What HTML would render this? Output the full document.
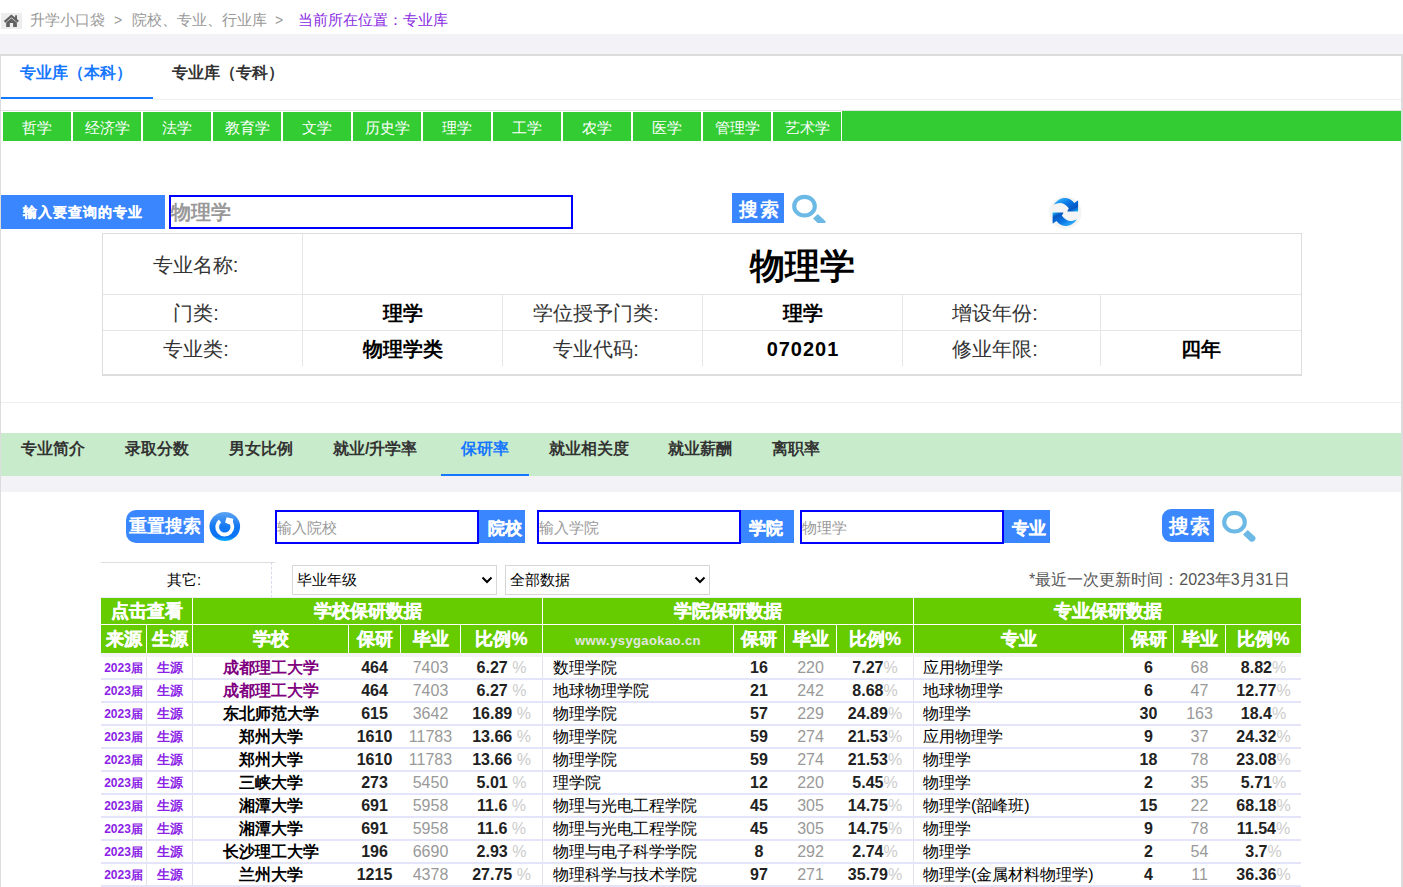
<!DOCTYPE html><html><head><meta charset="utf-8"><title>专业库</title><style>
*{margin:0;padding:0;box-sizing:border-box}
html,body{width:1403px;height:887px;overflow:hidden;background:#fff}
body{position:relative;font-family:"Liberation Sans",sans-serif;color:#333}
body>div{position:absolute}
.t{white-space:nowrap;overflow:visible}
.c{text-align:center}
svg{display:block}
</style></head><body>
<div style="left:1px;top:13px;width:21px;height:16px;background:#ededed"><svg width="21" height="16" viewBox="0 0 21 16"><polyline points="3.6,8.8 10.4,2.9 17.2,8.6" fill="none" stroke="#606060" stroke-width="2.3"/><rect x="14.1" y="2.3" width="1.9" height="4" fill="#606060"/><path d="M5.2,9.6 L10.4,5.3 L15.9,9.6 V13.9 H12.1 V10 H8.8 V13.9 H5.2 Z" fill="#606060"/></svg></div>
<div class="t" style="left:30px;top:9px;width:80px;height:22px;line-height:22px;font-size:15px;color:#999">升学小口袋</div>
<div class="t" style="left:114px;top:9px;width:12px;height:22px;line-height:22px;font-size:14px;color:#999">&gt;</div>
<div class="t" style="left:132px;top:9px;width:140px;height:22px;line-height:22px;font-size:15px;color:#999">院校、专业、行业库</div>
<div class="t" style="left:275px;top:9px;width:12px;height:22px;line-height:22px;font-size:14px;color:#999">&gt;</div>
<div class="t" style="left:298px;top:9px;width:160px;height:22px;line-height:22px;font-size:15px;color:#8a2be2">当前所在位置：专业库</div>
<div style="left:0px;top:34px;width:1403px;height:20px;background:#f3f3f7"></div>
<div style="left:0px;top:54px;width:1403px;height:348px;border-top:2px solid #dcdcdc;border-left:1px solid #dcdcdc;border-right:2px solid #dcdcdc"></div>
<div style="left:0px;top:402px;width:1403px;height:485px;border-left:1px solid #dcdcdc;border-right:2px solid #dcdcdc"></div>
<div class="t" style="left:20px;top:60px;width:120px;height:26px;line-height:26px;font-size:16px;font-weight:bold;color:#1677ff">专业库（本科）</div>
<div class="t" style="left:172px;top:60px;width:120px;height:26px;line-height:26px;font-size:16px;font-weight:bold;color:#333">专业库（专科）</div>
<div style="left:1px;top:97px;width:152px;height:2px;background:#1677ff"></div>
<div style="left:153px;top:99px;width:1248px;height:1px;background:#eeeeee"></div>
<div style="left:1px;top:110px;width:1400px;height:1px;background:#e3e3e3"></div>
<div style="left:1px;top:111px;width:1400px;height:30px;background:#33cc33"></div>
<div style="left:1px;top:111px;width:1px;height:30px;background:#fff"></div>
<div class="t c" style="left:2px;top:111px;width:70px;height:30px;border:1px solid #fff;border-bottom:0;line-height:32px;font-size:15px;color:#fff">哲学</div>
<div class="t c" style="left:72px;top:111px;width:70px;height:30px;border:1px solid #fff;border-bottom:0;line-height:32px;font-size:15px;color:#fff">经济学</div>
<div class="t c" style="left:142px;top:111px;width:70px;height:30px;border:1px solid #fff;border-bottom:0;line-height:32px;font-size:15px;color:#fff">法学</div>
<div class="t c" style="left:212px;top:111px;width:70px;height:30px;border:1px solid #fff;border-bottom:0;line-height:32px;font-size:15px;color:#fff">教育学</div>
<div class="t c" style="left:282px;top:111px;width:70px;height:30px;border:1px solid #fff;border-bottom:0;line-height:32px;font-size:15px;color:#fff">文学</div>
<div class="t c" style="left:352px;top:111px;width:70px;height:30px;border:1px solid #fff;border-bottom:0;line-height:32px;font-size:15px;color:#fff">历史学</div>
<div class="t c" style="left:422px;top:111px;width:70px;height:30px;border:1px solid #fff;border-bottom:0;line-height:32px;font-size:15px;color:#fff">理学</div>
<div class="t c" style="left:492px;top:111px;width:70px;height:30px;border:1px solid #fff;border-bottom:0;line-height:32px;font-size:15px;color:#fff">工学</div>
<div class="t c" style="left:562px;top:111px;width:70px;height:30px;border:1px solid #fff;border-bottom:0;line-height:32px;font-size:15px;color:#fff">农学</div>
<div class="t c" style="left:632px;top:111px;width:70px;height:30px;border:1px solid #fff;border-bottom:0;line-height:32px;font-size:15px;color:#fff">医学</div>
<div class="t c" style="left:702px;top:111px;width:70px;height:30px;border:1px solid #fff;border-bottom:0;line-height:32px;font-size:15px;color:#fff">管理学</div>
<div class="t c" style="left:772px;top:111px;width:70px;height:30px;border:1px solid #fff;border-bottom:0;line-height:32px;font-size:15px;color:#fff">艺术学</div>
<div style="left:1px;top:195px;width:164px;height:34px;background:#3a86ff"></div>
<div class="t" style="left:23px;top:195px;width:150px;height:34px;line-height:34px;color:#fff;font-size:14px;font-weight:bold;letter-spacing:1px;-webkit-text-stroke:0.2px #fff">输入要查询的专业</div>
<div style="left:169px;top:195px;width:404px;height:34px;border:2px solid #0000ff"></div>
<div class="t" style="left:171px;top:195px;width:120px;height:34px;line-height:34px;font-size:20px;font-weight:bold;color:#999">物理学</div>
<div style="left:732px;top:193px;width:52px;height:30px;background:#3a86ff"></div>
<div class="t" style="left:739px;top:195px;width:52px;height:30px;line-height:30px;color:#fff;font-size:19px;font-weight:bold;font-family:'Liberation Serif',serif;letter-spacing:2px">搜索</div>
<div style="left:788px;top:190px;width:42px;height:33px;overflow:hidden"><svg width="42" height="40"><ellipse cx="16.5" cy="16.2" rx="10.3" ry="9.35" fill="none" stroke="#6cb9e6" stroke-width="4.1"/><path d="M29.8,24.0 L25,28.5 L32,35.2 Q34.5,36.8 36.6,34.5 Q38.5,32.2 36.8,30.5 Z" fill="#6cb9e6"/></svg></div>
<div style="left:1049px;top:196px;width:33px;height:33px"><svg width="33" height="33" viewBox="0 0 33 33">
<defs><linearGradient id="rg" x1="0" y1="0" x2="1" y2="1"><stop offset="0" stop-color="#45c8ff"/><stop offset="0.45" stop-color="#0a78e6"/><stop offset="0.8" stop-color="#0456c4"/><stop offset="1" stop-color="#20b8ff"/></linearGradient></defs>
<circle cx="16.35" cy="16.5" r="16.2" fill="#f4f4f4"/>
<path d="M4.9,8.8 C8,3.6 13,1.8 16.7,2.0 C20,2.2 23,4 25.3,7.0 L29.1,4.2 L29.1,15.4 L18.2,15.4 L19.8,12.3 C17,9 14.5,7.2 12,7 C9.5,6.8 7,7.6 4.9,8.8 Z" fill="url(#rg)"/>
<path d="M4.9,8.8 C8,3.6 13,1.8 16.7,2.0 C20,2.2 23,4 25.3,7.0 L29.1,4.2 L29.1,15.4 L18.2,15.4 L19.8,12.3 C17,9 14.5,7.2 12,7 C9.5,6.8 7,7.6 4.9,8.8 Z" fill="url(#rg)" transform="rotate(180 16.35 16)"/>
</svg></div>
<div style="left:102px;top:233px;width:1200px;height:143px;border:1px solid #ddd;border-bottom:2px solid #ddd"></div>
<div style="left:103px;top:294px;width:1198px;height:1px;background:#e6e6e6"></div>
<div style="left:103px;top:330px;width:1198px;height:1px;background:#e6e6e6"></div>
<div style="left:302px;top:234px;width:1px;height:132px;background:#e6e6e6"></div>
<div style="left:502px;top:295px;width:1px;height:71px;background:#e6e6e6"></div>
<div style="left:702px;top:295px;width:1px;height:71px;background:#e6e6e6"></div>
<div style="left:902px;top:295px;width:1px;height:71px;background:#e6e6e6"></div>
<div style="left:1100px;top:295px;width:1px;height:71px;background:#e6e6e6"></div>
<div class="t" style="left:103px;top:235px;width:199px;height:60px;line-height:60px;font-size:20px;color:#333;text-align:center;padding-right:14px">专业名称:</div>
<div class="t" style="left:303px;top:236px;width:998px;height:60px;line-height:60px;font-size:35px;font-weight:bold;color:#000;text-align:center">物理学</div>
<div class="t" style="left:103px;top:296px;width:200px;height:35px;line-height:35px;font-size:20px;text-align:center;color:#333;padding-right:14px">门类:</div>
<div class="t" style="left:303px;top:296px;width:200px;height:35px;line-height:35px;font-size:20px;text-align:center;font-weight:bold;color:#000">理学</div>
<div class="t" style="left:503px;top:296px;width:200px;height:35px;line-height:35px;font-size:20px;text-align:center;color:#333;padding-right:14px">学位授予门类:</div>
<div class="t" style="left:703px;top:296px;width:200px;height:35px;line-height:35px;font-size:20px;text-align:center;font-weight:bold;color:#000">理学</div>
<div class="t" style="left:903px;top:296px;width:198px;height:35px;line-height:35px;font-size:20px;text-align:center;color:#333;padding-right:14px">增设年份:</div>
<div class="t" style="left:1101px;top:296px;width:200px;height:35px;line-height:35px;font-size:20px;text-align:center;font-weight:bold;color:#000"></div>
<div class="t" style="left:103px;top:332px;width:200px;height:35px;line-height:35px;font-size:20px;text-align:center;color:#333;padding-right:14px">专业类:</div>
<div class="t" style="left:303px;top:332px;width:200px;height:35px;line-height:35px;font-size:20px;text-align:center;font-weight:bold;color:#000">物理学类</div>
<div class="t" style="left:503px;top:332px;width:200px;height:35px;line-height:35px;font-size:20px;text-align:center;color:#333;padding-right:14px">专业代码:</div>
<div class="t" style="left:703px;top:332px;width:200px;height:35px;line-height:35px;font-size:20px;text-align:center;font-weight:bold;color:#000"><span style="letter-spacing:1px">070201</span></div>
<div class="t" style="left:903px;top:332px;width:198px;height:35px;line-height:35px;font-size:20px;text-align:center;color:#333;padding-right:14px">修业年限:</div>
<div class="t" style="left:1101px;top:332px;width:200px;height:35px;line-height:35px;font-size:20px;text-align:center;font-weight:bold;color:#000">四年</div>
<div style="left:1px;top:402px;width:1400px;height:1px;background:#eeeeee"></div>
<div style="left:1px;top:433px;width:1400px;height:43px;background:#c8ebcb"></div>
<div style="left:1px;top:476px;width:1400px;height:16px;background:#f3f3f7"></div>
<div class="t" style="left:21px;top:433px;width:120px;height:31px;line-height:31px;font-size:16px;font-weight:bold;color:#333">专业简介</div>
<div class="t" style="left:125px;top:433px;width:120px;height:31px;line-height:31px;font-size:16px;font-weight:bold;color:#333">录取分数</div>
<div class="t" style="left:229px;top:433px;width:120px;height:31px;line-height:31px;font-size:16px;font-weight:bold;color:#333">男女比例</div>
<div class="t" style="left:333px;top:433px;width:120px;height:31px;line-height:31px;font-size:16px;font-weight:bold;color:#333">就业/升学率</div>
<div class="t" style="left:461px;top:433px;width:120px;height:31px;line-height:31px;font-size:16px;font-weight:bold;color:#1677ff">保研率</div>
<div class="t" style="left:549px;top:433px;width:120px;height:31px;line-height:31px;font-size:16px;font-weight:bold;color:#333">就业相关度</div>
<div class="t" style="left:668px;top:433px;width:120px;height:31px;line-height:31px;font-size:16px;font-weight:bold;color:#333">就业薪酬</div>
<div class="t" style="left:772px;top:433px;width:120px;height:31px;line-height:31px;font-size:16px;font-weight:bold;color:#333">离职率</div>
<div style="left:441px;top:474px;width:88px;height:2px;background:#1677ff"></div>
<div class="t" style="left:126px;top:510px;width:78px;height:33px;line-height:33px;background:#3a86ff;border-radius:10px 0 0 10px;color:#fff;font-size:18px;font-weight:bold;font-family:'Liberation Serif',serif;text-align:center">重置搜索</div>
<div style="left:209px;top:511px;width:32px;height:32px"><svg width="32" height="32" viewBox="0 0 32 32">
<defs><linearGradient id="cg" x1="0" y1="0" x2="0" y2="1"><stop offset="0" stop-color="#5ea4f2"/><stop offset="0.5" stop-color="#1378f2"/><stop offset="0.85" stop-color="#0a74f5"/><stop offset="1" stop-color="#10b4ff"/></linearGradient></defs>
<ellipse cx="15.8" cy="15.5" rx="15.3" ry="14.5" fill="url(#cg)"/>
<path d="M11.0,10.0 A7.6 7.6 0 1 0 21.0,10.4" fill="none" stroke="#fff" stroke-width="3.8"/>
<path d="M17.6,6.2 L24.3,7.7 L23.8,11.1 L20.2,13.4 L16.1,11.6 Z" fill="#fff"/>
</svg></div>
<div style="left:275px;top:510px;width:204px;height:34px;border:2px solid #0000ff"></div>
<div class="t" style="left:277px;top:511px;width:150px;height:34px;line-height:34px;font-size:15px;color:#999">输入院校</div>
<div style="left:479px;top:510px;width:46px;height:33px;background:#3a86ff"></div>
<div class="t" style="left:488px;top:512px;width:40px;height:33px;line-height:33px;color:#fff;font-size:17px;font-weight:bold;-webkit-text-stroke:0.3px #fff">院校</div>
<div style="left:537px;top:510px;width:204px;height:34px;border:2px solid #0000ff"></div>
<div class="t" style="left:539px;top:511px;width:150px;height:34px;line-height:34px;font-size:15px;color:#999">输入学院</div>
<div style="left:741px;top:510px;width:53px;height:33px;background:#3a86ff"></div>
<div class="t" style="left:749px;top:512px;width:40px;height:33px;line-height:33px;color:#fff;font-size:17px;font-weight:bold;-webkit-text-stroke:0.3px #fff">学院</div>
<div style="left:800px;top:510px;width:204px;height:34px;border:2px solid #0000ff"></div>
<div class="t" style="left:802px;top:511px;width:150px;height:34px;line-height:34px;font-size:15px;color:#999">物理学</div>
<div style="left:1004px;top:510px;width:46px;height:33px;background:#3a86ff"></div>
<div class="t" style="left:1012px;top:512px;width:40px;height:33px;line-height:33px;color:#fff;font-size:17px;font-weight:bold;-webkit-text-stroke:0.3px #fff">专业</div>
<div style="left:1162px;top:509px;width:52px;height:33px;background:#3a86ff;border-radius:9px 0 0 9px"></div>
<div class="t" style="left:1169px;top:510px;width:52px;height:33px;line-height:33px;color:#fff;font-size:19.5px;font-weight:bold;font-family:'Liberation Serif',serif;letter-spacing:1px">搜索</div>
<div style="left:1218px;top:505px;width:42px;height:40px;overflow:hidden"><svg width="42" height="40"><ellipse cx="16.5" cy="17.2" rx="10.3" ry="9.35" fill="none" stroke="#6cb9e6" stroke-width="4.1"/><path d="M29.8,25.0 L25,29.5 L32,36.2 Q34.5,37.8 36.6,35.5 Q38.5,33.2 36.8,31.5 Z" fill="#6cb9e6"/></svg></div>
<div style="left:101px;top:562px;width:174px;height:1px;background:#dddddd"></div>
<div style="left:271px;top:562px;width:1px;height:36px;border-left:1px dashed #d8d8f0"></div>
<div class="t" style="left:101px;top:563px;width:174px;height:34px;line-height:34px;font-size:15px;color:#000;text-align:center;padding-right:8px">其它:</div>
<div style="left:292px;top:565px;width:205px;height:30px;border:1px solid #d6d6d6;background:#fff"></div>
<div class="t" style="left:297px;top:565px;width:120px;height:30px;line-height:30px;font-size:15px;color:#000">毕业年级</div>
<div style="left:481px;top:576px;width:12px;height:8px"><svg width="12" height="8" viewBox="0 0 12 8"><polyline points="1.5,1.5 6,6 10.5,1.5" fill="none" stroke="#000" stroke-width="2"/></svg></div>
<div style="left:505px;top:565px;width:205px;height:30px;border:1px solid #d6d6d6;background:#fff"></div>
<div class="t" style="left:510px;top:565px;width:120px;height:30px;line-height:30px;font-size:15px;color:#000">全部数据</div>
<div style="left:694px;top:576px;width:12px;height:8px"><svg width="12" height="8" viewBox="0 0 12 8"><polyline points="1.5,1.5 6,6 10.5,1.5" fill="none" stroke="#000" stroke-width="2"/></svg></div>
<div class="t" style="left:1029px;top:563px;width:270px;height:34px;line-height:34px;font-size:16px;color:#555">*最近一次更新时间：2023年3月31日</div>
<div style="left:101px;top:597px;width:1200px;height:1px;background:#ededfb"></div>
<div style="left:101px;top:598px;width:1200px;height:55px;background:#66cc00"></div>
<div style="left:101px;top:624px;width:1200px;height:1px;background:#fff"></div>
<div style="left:192px;top:598px;width:1px;height:55px;background:#fff"></div>
<div style="left:542px;top:598px;width:1px;height:55px;background:#fff"></div>
<div style="left:913px;top:598px;width:1px;height:55px;background:#fff"></div>
<div style="left:146px;top:625px;width:1px;height:28px;background:#fff"></div>
<div style="left:348px;top:625px;width:1px;height:28px;background:#fff"></div>
<div style="left:400px;top:625px;width:1px;height:28px;background:#fff"></div>
<div style="left:460px;top:625px;width:1px;height:28px;background:#fff"></div>
<div style="left:733px;top:625px;width:1px;height:28px;background:#fff"></div>
<div style="left:784px;top:625px;width:1px;height:28px;background:#fff"></div>
<div style="left:836px;top:625px;width:1px;height:28px;background:#fff"></div>
<div style="left:1123px;top:625px;width:1px;height:28px;background:#fff"></div>
<div style="left:1173px;top:625px;width:1px;height:28px;background:#fff"></div>
<div style="left:1225px;top:625px;width:1px;height:28px;background:#fff"></div>
<div class="t" style="left:101px;top:598px;width:91px;height:26px;line-height:26px;font-size:18px;font-weight:bold;color:#fff;text-align:center;-webkit-text-stroke:0.35px #fff">点击查看</div>
<div class="t" style="left:193px;top:598px;width:349px;height:26px;line-height:26px;font-size:18px;font-weight:bold;color:#fff;text-align:center;-webkit-text-stroke:0.35px #fff">学校保研数据</div>
<div class="t" style="left:543px;top:598px;width:370px;height:26px;line-height:26px;font-size:18px;font-weight:bold;color:#fff;text-align:center;-webkit-text-stroke:0.35px #fff">学院保研数据</div>
<div class="t" style="left:914px;top:598px;width:387px;height:26px;line-height:26px;font-size:18px;font-weight:bold;color:#fff;text-align:center;-webkit-text-stroke:0.35px #fff">专业保研数据</div>
<div class="t" style="left:101px;top:625px;width:45px;height:28px;line-height:28px;font-size:18px;font-weight:bold;color:#fff;text-align:center;-webkit-text-stroke:0.35px #fff">来源</div>
<div class="t" style="left:147px;top:625px;width:45px;height:28px;line-height:28px;font-size:18px;font-weight:bold;color:#fff;text-align:center;-webkit-text-stroke:0.35px #fff">生源</div>
<div class="t" style="left:193px;top:625px;width:155px;height:28px;line-height:28px;font-size:18px;font-weight:bold;color:#fff;text-align:center;-webkit-text-stroke:0.35px #fff">学校</div>
<div class="t" style="left:349px;top:625px;width:51px;height:28px;line-height:28px;font-size:18px;font-weight:bold;color:#fff;text-align:center;-webkit-text-stroke:0.35px #fff">保研</div>
<div class="t" style="left:401px;top:625px;width:59px;height:28px;line-height:28px;font-size:18px;font-weight:bold;color:#fff;text-align:center;-webkit-text-stroke:0.35px #fff">毕业</div>
<div class="t" style="left:461px;top:625px;width:81px;height:28px;line-height:28px;font-size:18px;font-weight:bold;color:#fff;text-align:center;-webkit-text-stroke:0.35px #fff">比例%</div>
<div class="t" style="left:543px;top:625px;width:190px;height:28px;line-height:28px;font-size:18px;font-weight:bold;color:#fff;text-align:center;-webkit-text-stroke:0.35px #fff"></div>
<div class="t" style="left:734px;top:625px;width:50px;height:28px;line-height:28px;font-size:18px;font-weight:bold;color:#fff;text-align:center;-webkit-text-stroke:0.35px #fff">保研</div>
<div class="t" style="left:785px;top:625px;width:51px;height:28px;line-height:28px;font-size:18px;font-weight:bold;color:#fff;text-align:center;-webkit-text-stroke:0.35px #fff">毕业</div>
<div class="t" style="left:837px;top:625px;width:76px;height:28px;line-height:28px;font-size:18px;font-weight:bold;color:#fff;text-align:center;-webkit-text-stroke:0.35px #fff">比例%</div>
<div class="t" style="left:914px;top:625px;width:209px;height:28px;line-height:28px;font-size:18px;font-weight:bold;color:#fff;text-align:center;-webkit-text-stroke:0.35px #fff">专业</div>
<div class="t" style="left:1124px;top:625px;width:49px;height:28px;line-height:28px;font-size:18px;font-weight:bold;color:#fff;text-align:center;-webkit-text-stroke:0.35px #fff">保研</div>
<div class="t" style="left:1174px;top:625px;width:51px;height:28px;line-height:28px;font-size:18px;font-weight:bold;color:#fff;text-align:center;-webkit-text-stroke:0.35px #fff">毕业</div>
<div class="t" style="left:1226px;top:625px;width:75px;height:28px;line-height:28px;font-size:18px;font-weight:bold;color:#fff;text-align:center;-webkit-text-stroke:0.35px #fff">比例%</div>
<div class="t" style="left:543px;top:627px;width:190px;height:28px;line-height:28px;font-size:13px;font-weight:bold;color:#e2e6e0;text-align:center;letter-spacing:0.4px">www.ysygaokao.cn</div>
<div style="left:101px;top:653px;width:1200px;height:4px;background:#f4f4f4"></div>
<div style="left:101px;top:678px;width:1200px;height:2px;background:#e4e4fa"></div>
<div style="left:146px;top:657px;width:1px;height:21px;background:#e2e2ea"></div>
<div style="left:192px;top:657px;width:1px;height:21px;background:#e2e2ea"></div>
<div style="left:542px;top:657px;width:1px;height:21px;background:#e2e2ea"></div>
<div style="left:913px;top:657px;width:1px;height:21px;background:#e2e2ea"></div>
<div class="t" style="left:101px;top:658px;width:45px;height:21px;line-height:21px;font-size:12px;font-weight:bold;color:#8a22e6;text-align:center">2023届</div>
<div class="t" style="left:147px;top:658px;width:45px;height:21px;line-height:21px;font-size:12.5px;font-weight:bold;color:#8a22e6;text-align:center">生源</div>
<div class="t" style="left:193px;top:657px;width:155px;height:21px;line-height:21px;font-size:16px;font-weight:bold;color:#800080;text-align:center">成都理工大学</div>
<div class="t" style="left:349px;top:657px;width:51px;height:21px;line-height:21px;font-size:16px;font-weight:bold;color:#222;text-align:center">464</div>
<div class="t" style="left:401px;top:657px;width:59px;height:21px;line-height:21px;font-size:16px;color:#999;text-align:center">7403</div>
<div class="t" style="left:461px;top:657px;width:81px;height:21px;line-height:21px;font-size:16px;font-weight:bold;color:#222;text-align:center">6.27 <span style="color:#ccc;font-weight:normal">%</span></div>
<div class="t" style="left:553px;top:657px;width:180px;height:21px;line-height:21px;font-size:16px;color:#000">数理学院</div>
<div class="t" style="left:734px;top:657px;width:50px;height:21px;line-height:21px;font-size:16px;font-weight:bold;color:#222;text-align:center">16</div>
<div class="t" style="left:785px;top:657px;width:51px;height:21px;line-height:21px;font-size:16px;color:#999;text-align:center">220</div>
<div class="t" style="left:837px;top:657px;width:76px;height:21px;line-height:21px;font-size:16px;font-weight:bold;color:#222;text-align:center">7.27<span style="color:#ccc;font-weight:normal">%</span></div>
<div class="t" style="left:923px;top:657px;width:200px;height:21px;line-height:21px;font-size:16px;color:#000">应用物理学</div>
<div class="t" style="left:1124px;top:657px;width:49px;height:21px;line-height:21px;font-size:16px;font-weight:bold;color:#222;text-align:center">6</div>
<div class="t" style="left:1174px;top:657px;width:51px;height:21px;line-height:21px;font-size:16px;color:#999;text-align:center">68</div>
<div class="t" style="left:1226px;top:657px;width:75px;height:21px;line-height:21px;font-size:16px;font-weight:bold;color:#222;text-align:center">8.82<span style="color:#ccc;font-weight:normal">%</span></div>
<div style="left:101px;top:701px;width:1200px;height:2px;background:#e4e4fa"></div>
<div style="left:146px;top:680px;width:1px;height:21px;background:#e2e2ea"></div>
<div style="left:192px;top:680px;width:1px;height:21px;background:#e2e2ea"></div>
<div style="left:542px;top:680px;width:1px;height:21px;background:#e2e2ea"></div>
<div style="left:913px;top:680px;width:1px;height:21px;background:#e2e2ea"></div>
<div class="t" style="left:101px;top:681px;width:45px;height:21px;line-height:21px;font-size:12px;font-weight:bold;color:#8a22e6;text-align:center">2023届</div>
<div class="t" style="left:147px;top:681px;width:45px;height:21px;line-height:21px;font-size:12.5px;font-weight:bold;color:#8a22e6;text-align:center">生源</div>
<div class="t" style="left:193px;top:680px;width:155px;height:21px;line-height:21px;font-size:16px;font-weight:bold;color:#800080;text-align:center">成都理工大学</div>
<div class="t" style="left:349px;top:680px;width:51px;height:21px;line-height:21px;font-size:16px;font-weight:bold;color:#222;text-align:center">464</div>
<div class="t" style="left:401px;top:680px;width:59px;height:21px;line-height:21px;font-size:16px;color:#999;text-align:center">7403</div>
<div class="t" style="left:461px;top:680px;width:81px;height:21px;line-height:21px;font-size:16px;font-weight:bold;color:#222;text-align:center">6.27 <span style="color:#ccc;font-weight:normal">%</span></div>
<div class="t" style="left:553px;top:680px;width:180px;height:21px;line-height:21px;font-size:16px;color:#000">地球物理学院</div>
<div class="t" style="left:734px;top:680px;width:50px;height:21px;line-height:21px;font-size:16px;font-weight:bold;color:#222;text-align:center">21</div>
<div class="t" style="left:785px;top:680px;width:51px;height:21px;line-height:21px;font-size:16px;color:#999;text-align:center">242</div>
<div class="t" style="left:837px;top:680px;width:76px;height:21px;line-height:21px;font-size:16px;font-weight:bold;color:#222;text-align:center">8.68<span style="color:#ccc;font-weight:normal">%</span></div>
<div class="t" style="left:923px;top:680px;width:200px;height:21px;line-height:21px;font-size:16px;color:#000">地球物理学</div>
<div class="t" style="left:1124px;top:680px;width:49px;height:21px;line-height:21px;font-size:16px;font-weight:bold;color:#222;text-align:center">6</div>
<div class="t" style="left:1174px;top:680px;width:51px;height:21px;line-height:21px;font-size:16px;color:#999;text-align:center">47</div>
<div class="t" style="left:1226px;top:680px;width:75px;height:21px;line-height:21px;font-size:16px;font-weight:bold;color:#222;text-align:center">12.77<span style="color:#ccc;font-weight:normal">%</span></div>
<div style="left:101px;top:724px;width:1200px;height:2px;background:#e4e4fa"></div>
<div style="left:146px;top:703px;width:1px;height:21px;background:#e2e2ea"></div>
<div style="left:192px;top:703px;width:1px;height:21px;background:#e2e2ea"></div>
<div style="left:542px;top:703px;width:1px;height:21px;background:#e2e2ea"></div>
<div style="left:913px;top:703px;width:1px;height:21px;background:#e2e2ea"></div>
<div class="t" style="left:101px;top:704px;width:45px;height:21px;line-height:21px;font-size:12px;font-weight:bold;color:#8a22e6;text-align:center">2023届</div>
<div class="t" style="left:147px;top:704px;width:45px;height:21px;line-height:21px;font-size:12.5px;font-weight:bold;color:#8a22e6;text-align:center">生源</div>
<div class="t" style="left:193px;top:703px;width:155px;height:21px;line-height:21px;font-size:16px;font-weight:bold;color:#000;text-align:center">东北师范大学</div>
<div class="t" style="left:349px;top:703px;width:51px;height:21px;line-height:21px;font-size:16px;font-weight:bold;color:#222;text-align:center">615</div>
<div class="t" style="left:401px;top:703px;width:59px;height:21px;line-height:21px;font-size:16px;color:#999;text-align:center">3642</div>
<div class="t" style="left:461px;top:703px;width:81px;height:21px;line-height:21px;font-size:16px;font-weight:bold;color:#222;text-align:center">16.89 <span style="color:#ccc;font-weight:normal">%</span></div>
<div class="t" style="left:553px;top:703px;width:180px;height:21px;line-height:21px;font-size:16px;color:#000">物理学院</div>
<div class="t" style="left:734px;top:703px;width:50px;height:21px;line-height:21px;font-size:16px;font-weight:bold;color:#222;text-align:center">57</div>
<div class="t" style="left:785px;top:703px;width:51px;height:21px;line-height:21px;font-size:16px;color:#999;text-align:center">229</div>
<div class="t" style="left:837px;top:703px;width:76px;height:21px;line-height:21px;font-size:16px;font-weight:bold;color:#222;text-align:center">24.89<span style="color:#ccc;font-weight:normal">%</span></div>
<div class="t" style="left:923px;top:703px;width:200px;height:21px;line-height:21px;font-size:16px;color:#000">物理学</div>
<div class="t" style="left:1124px;top:703px;width:49px;height:21px;line-height:21px;font-size:16px;font-weight:bold;color:#222;text-align:center">30</div>
<div class="t" style="left:1174px;top:703px;width:51px;height:21px;line-height:21px;font-size:16px;color:#999;text-align:center">163</div>
<div class="t" style="left:1226px;top:703px;width:75px;height:21px;line-height:21px;font-size:16px;font-weight:bold;color:#222;text-align:center">18.4<span style="color:#ccc;font-weight:normal">%</span></div>
<div style="left:101px;top:747px;width:1200px;height:2px;background:#e4e4fa"></div>
<div style="left:146px;top:726px;width:1px;height:21px;background:#e2e2ea"></div>
<div style="left:192px;top:726px;width:1px;height:21px;background:#e2e2ea"></div>
<div style="left:542px;top:726px;width:1px;height:21px;background:#e2e2ea"></div>
<div style="left:913px;top:726px;width:1px;height:21px;background:#e2e2ea"></div>
<div class="t" style="left:101px;top:727px;width:45px;height:21px;line-height:21px;font-size:12px;font-weight:bold;color:#8a22e6;text-align:center">2023届</div>
<div class="t" style="left:147px;top:727px;width:45px;height:21px;line-height:21px;font-size:12.5px;font-weight:bold;color:#8a22e6;text-align:center">生源</div>
<div class="t" style="left:193px;top:726px;width:155px;height:21px;line-height:21px;font-size:16px;font-weight:bold;color:#000;text-align:center">郑州大学</div>
<div class="t" style="left:349px;top:726px;width:51px;height:21px;line-height:21px;font-size:16px;font-weight:bold;color:#222;text-align:center">1610</div>
<div class="t" style="left:401px;top:726px;width:59px;height:21px;line-height:21px;font-size:16px;color:#999;text-align:center">11783</div>
<div class="t" style="left:461px;top:726px;width:81px;height:21px;line-height:21px;font-size:16px;font-weight:bold;color:#222;text-align:center">13.66 <span style="color:#ccc;font-weight:normal">%</span></div>
<div class="t" style="left:553px;top:726px;width:180px;height:21px;line-height:21px;font-size:16px;color:#000">物理学院</div>
<div class="t" style="left:734px;top:726px;width:50px;height:21px;line-height:21px;font-size:16px;font-weight:bold;color:#222;text-align:center">59</div>
<div class="t" style="left:785px;top:726px;width:51px;height:21px;line-height:21px;font-size:16px;color:#999;text-align:center">274</div>
<div class="t" style="left:837px;top:726px;width:76px;height:21px;line-height:21px;font-size:16px;font-weight:bold;color:#222;text-align:center">21.53<span style="color:#ccc;font-weight:normal">%</span></div>
<div class="t" style="left:923px;top:726px;width:200px;height:21px;line-height:21px;font-size:16px;color:#000">应用物理学</div>
<div class="t" style="left:1124px;top:726px;width:49px;height:21px;line-height:21px;font-size:16px;font-weight:bold;color:#222;text-align:center">9</div>
<div class="t" style="left:1174px;top:726px;width:51px;height:21px;line-height:21px;font-size:16px;color:#999;text-align:center">37</div>
<div class="t" style="left:1226px;top:726px;width:75px;height:21px;line-height:21px;font-size:16px;font-weight:bold;color:#222;text-align:center">24.32<span style="color:#ccc;font-weight:normal">%</span></div>
<div style="left:101px;top:770px;width:1200px;height:2px;background:#e4e4fa"></div>
<div style="left:146px;top:749px;width:1px;height:21px;background:#e2e2ea"></div>
<div style="left:192px;top:749px;width:1px;height:21px;background:#e2e2ea"></div>
<div style="left:542px;top:749px;width:1px;height:21px;background:#e2e2ea"></div>
<div style="left:913px;top:749px;width:1px;height:21px;background:#e2e2ea"></div>
<div class="t" style="left:101px;top:750px;width:45px;height:21px;line-height:21px;font-size:12px;font-weight:bold;color:#8a22e6;text-align:center">2023届</div>
<div class="t" style="left:147px;top:750px;width:45px;height:21px;line-height:21px;font-size:12.5px;font-weight:bold;color:#8a22e6;text-align:center">生源</div>
<div class="t" style="left:193px;top:749px;width:155px;height:21px;line-height:21px;font-size:16px;font-weight:bold;color:#000;text-align:center">郑州大学</div>
<div class="t" style="left:349px;top:749px;width:51px;height:21px;line-height:21px;font-size:16px;font-weight:bold;color:#222;text-align:center">1610</div>
<div class="t" style="left:401px;top:749px;width:59px;height:21px;line-height:21px;font-size:16px;color:#999;text-align:center">11783</div>
<div class="t" style="left:461px;top:749px;width:81px;height:21px;line-height:21px;font-size:16px;font-weight:bold;color:#222;text-align:center">13.66 <span style="color:#ccc;font-weight:normal">%</span></div>
<div class="t" style="left:553px;top:749px;width:180px;height:21px;line-height:21px;font-size:16px;color:#000">物理学院</div>
<div class="t" style="left:734px;top:749px;width:50px;height:21px;line-height:21px;font-size:16px;font-weight:bold;color:#222;text-align:center">59</div>
<div class="t" style="left:785px;top:749px;width:51px;height:21px;line-height:21px;font-size:16px;color:#999;text-align:center">274</div>
<div class="t" style="left:837px;top:749px;width:76px;height:21px;line-height:21px;font-size:16px;font-weight:bold;color:#222;text-align:center">21.53<span style="color:#ccc;font-weight:normal">%</span></div>
<div class="t" style="left:923px;top:749px;width:200px;height:21px;line-height:21px;font-size:16px;color:#000">物理学</div>
<div class="t" style="left:1124px;top:749px;width:49px;height:21px;line-height:21px;font-size:16px;font-weight:bold;color:#222;text-align:center">18</div>
<div class="t" style="left:1174px;top:749px;width:51px;height:21px;line-height:21px;font-size:16px;color:#999;text-align:center">78</div>
<div class="t" style="left:1226px;top:749px;width:75px;height:21px;line-height:21px;font-size:16px;font-weight:bold;color:#222;text-align:center">23.08<span style="color:#ccc;font-weight:normal">%</span></div>
<div style="left:101px;top:793px;width:1200px;height:2px;background:#e4e4fa"></div>
<div style="left:146px;top:772px;width:1px;height:21px;background:#e2e2ea"></div>
<div style="left:192px;top:772px;width:1px;height:21px;background:#e2e2ea"></div>
<div style="left:542px;top:772px;width:1px;height:21px;background:#e2e2ea"></div>
<div style="left:913px;top:772px;width:1px;height:21px;background:#e2e2ea"></div>
<div class="t" style="left:101px;top:773px;width:45px;height:21px;line-height:21px;font-size:12px;font-weight:bold;color:#8a22e6;text-align:center">2023届</div>
<div class="t" style="left:147px;top:773px;width:45px;height:21px;line-height:21px;font-size:12.5px;font-weight:bold;color:#8a22e6;text-align:center">生源</div>
<div class="t" style="left:193px;top:772px;width:155px;height:21px;line-height:21px;font-size:16px;font-weight:bold;color:#000;text-align:center">三峡大学</div>
<div class="t" style="left:349px;top:772px;width:51px;height:21px;line-height:21px;font-size:16px;font-weight:bold;color:#222;text-align:center">273</div>
<div class="t" style="left:401px;top:772px;width:59px;height:21px;line-height:21px;font-size:16px;color:#999;text-align:center">5450</div>
<div class="t" style="left:461px;top:772px;width:81px;height:21px;line-height:21px;font-size:16px;font-weight:bold;color:#222;text-align:center">5.01 <span style="color:#ccc;font-weight:normal">%</span></div>
<div class="t" style="left:553px;top:772px;width:180px;height:21px;line-height:21px;font-size:16px;color:#000">理学院</div>
<div class="t" style="left:734px;top:772px;width:50px;height:21px;line-height:21px;font-size:16px;font-weight:bold;color:#222;text-align:center">12</div>
<div class="t" style="left:785px;top:772px;width:51px;height:21px;line-height:21px;font-size:16px;color:#999;text-align:center">220</div>
<div class="t" style="left:837px;top:772px;width:76px;height:21px;line-height:21px;font-size:16px;font-weight:bold;color:#222;text-align:center">5.45<span style="color:#ccc;font-weight:normal">%</span></div>
<div class="t" style="left:923px;top:772px;width:200px;height:21px;line-height:21px;font-size:16px;color:#000">物理学</div>
<div class="t" style="left:1124px;top:772px;width:49px;height:21px;line-height:21px;font-size:16px;font-weight:bold;color:#222;text-align:center">2</div>
<div class="t" style="left:1174px;top:772px;width:51px;height:21px;line-height:21px;font-size:16px;color:#999;text-align:center">35</div>
<div class="t" style="left:1226px;top:772px;width:75px;height:21px;line-height:21px;font-size:16px;font-weight:bold;color:#222;text-align:center">5.71<span style="color:#ccc;font-weight:normal">%</span></div>
<div style="left:101px;top:816px;width:1200px;height:2px;background:#e4e4fa"></div>
<div style="left:146px;top:795px;width:1px;height:21px;background:#e2e2ea"></div>
<div style="left:192px;top:795px;width:1px;height:21px;background:#e2e2ea"></div>
<div style="left:542px;top:795px;width:1px;height:21px;background:#e2e2ea"></div>
<div style="left:913px;top:795px;width:1px;height:21px;background:#e2e2ea"></div>
<div class="t" style="left:101px;top:796px;width:45px;height:21px;line-height:21px;font-size:12px;font-weight:bold;color:#8a22e6;text-align:center">2023届</div>
<div class="t" style="left:147px;top:796px;width:45px;height:21px;line-height:21px;font-size:12.5px;font-weight:bold;color:#8a22e6;text-align:center">生源</div>
<div class="t" style="left:193px;top:795px;width:155px;height:21px;line-height:21px;font-size:16px;font-weight:bold;color:#000;text-align:center">湘潭大学</div>
<div class="t" style="left:349px;top:795px;width:51px;height:21px;line-height:21px;font-size:16px;font-weight:bold;color:#222;text-align:center">691</div>
<div class="t" style="left:401px;top:795px;width:59px;height:21px;line-height:21px;font-size:16px;color:#999;text-align:center">5958</div>
<div class="t" style="left:461px;top:795px;width:81px;height:21px;line-height:21px;font-size:16px;font-weight:bold;color:#222;text-align:center">11.6 <span style="color:#ccc;font-weight:normal">%</span></div>
<div class="t" style="left:553px;top:795px;width:180px;height:21px;line-height:21px;font-size:16px;color:#000">物理与光电工程学院</div>
<div class="t" style="left:734px;top:795px;width:50px;height:21px;line-height:21px;font-size:16px;font-weight:bold;color:#222;text-align:center">45</div>
<div class="t" style="left:785px;top:795px;width:51px;height:21px;line-height:21px;font-size:16px;color:#999;text-align:center">305</div>
<div class="t" style="left:837px;top:795px;width:76px;height:21px;line-height:21px;font-size:16px;font-weight:bold;color:#222;text-align:center">14.75<span style="color:#ccc;font-weight:normal">%</span></div>
<div class="t" style="left:923px;top:795px;width:200px;height:21px;line-height:21px;font-size:16px;color:#000">物理学(韶峰班)</div>
<div class="t" style="left:1124px;top:795px;width:49px;height:21px;line-height:21px;font-size:16px;font-weight:bold;color:#222;text-align:center">15</div>
<div class="t" style="left:1174px;top:795px;width:51px;height:21px;line-height:21px;font-size:16px;color:#999;text-align:center">22</div>
<div class="t" style="left:1226px;top:795px;width:75px;height:21px;line-height:21px;font-size:16px;font-weight:bold;color:#222;text-align:center">68.18<span style="color:#ccc;font-weight:normal">%</span></div>
<div style="left:101px;top:839px;width:1200px;height:2px;background:#e4e4fa"></div>
<div style="left:146px;top:818px;width:1px;height:21px;background:#e2e2ea"></div>
<div style="left:192px;top:818px;width:1px;height:21px;background:#e2e2ea"></div>
<div style="left:542px;top:818px;width:1px;height:21px;background:#e2e2ea"></div>
<div style="left:913px;top:818px;width:1px;height:21px;background:#e2e2ea"></div>
<div class="t" style="left:101px;top:819px;width:45px;height:21px;line-height:21px;font-size:12px;font-weight:bold;color:#8a22e6;text-align:center">2023届</div>
<div class="t" style="left:147px;top:819px;width:45px;height:21px;line-height:21px;font-size:12.5px;font-weight:bold;color:#8a22e6;text-align:center">生源</div>
<div class="t" style="left:193px;top:818px;width:155px;height:21px;line-height:21px;font-size:16px;font-weight:bold;color:#000;text-align:center">湘潭大学</div>
<div class="t" style="left:349px;top:818px;width:51px;height:21px;line-height:21px;font-size:16px;font-weight:bold;color:#222;text-align:center">691</div>
<div class="t" style="left:401px;top:818px;width:59px;height:21px;line-height:21px;font-size:16px;color:#999;text-align:center">5958</div>
<div class="t" style="left:461px;top:818px;width:81px;height:21px;line-height:21px;font-size:16px;font-weight:bold;color:#222;text-align:center">11.6 <span style="color:#ccc;font-weight:normal">%</span></div>
<div class="t" style="left:553px;top:818px;width:180px;height:21px;line-height:21px;font-size:16px;color:#000">物理与光电工程学院</div>
<div class="t" style="left:734px;top:818px;width:50px;height:21px;line-height:21px;font-size:16px;font-weight:bold;color:#222;text-align:center">45</div>
<div class="t" style="left:785px;top:818px;width:51px;height:21px;line-height:21px;font-size:16px;color:#999;text-align:center">305</div>
<div class="t" style="left:837px;top:818px;width:76px;height:21px;line-height:21px;font-size:16px;font-weight:bold;color:#222;text-align:center">14.75<span style="color:#ccc;font-weight:normal">%</span></div>
<div class="t" style="left:923px;top:818px;width:200px;height:21px;line-height:21px;font-size:16px;color:#000">物理学</div>
<div class="t" style="left:1124px;top:818px;width:49px;height:21px;line-height:21px;font-size:16px;font-weight:bold;color:#222;text-align:center">9</div>
<div class="t" style="left:1174px;top:818px;width:51px;height:21px;line-height:21px;font-size:16px;color:#999;text-align:center">78</div>
<div class="t" style="left:1226px;top:818px;width:75px;height:21px;line-height:21px;font-size:16px;font-weight:bold;color:#222;text-align:center">11.54<span style="color:#ccc;font-weight:normal">%</span></div>
<div style="left:101px;top:862px;width:1200px;height:2px;background:#e4e4fa"></div>
<div style="left:146px;top:841px;width:1px;height:21px;background:#e2e2ea"></div>
<div style="left:192px;top:841px;width:1px;height:21px;background:#e2e2ea"></div>
<div style="left:542px;top:841px;width:1px;height:21px;background:#e2e2ea"></div>
<div style="left:913px;top:841px;width:1px;height:21px;background:#e2e2ea"></div>
<div class="t" style="left:101px;top:842px;width:45px;height:21px;line-height:21px;font-size:12px;font-weight:bold;color:#8a22e6;text-align:center">2023届</div>
<div class="t" style="left:147px;top:842px;width:45px;height:21px;line-height:21px;font-size:12.5px;font-weight:bold;color:#8a22e6;text-align:center">生源</div>
<div class="t" style="left:193px;top:841px;width:155px;height:21px;line-height:21px;font-size:16px;font-weight:bold;color:#000;text-align:center">长沙理工大学</div>
<div class="t" style="left:349px;top:841px;width:51px;height:21px;line-height:21px;font-size:16px;font-weight:bold;color:#222;text-align:center">196</div>
<div class="t" style="left:401px;top:841px;width:59px;height:21px;line-height:21px;font-size:16px;color:#999;text-align:center">6690</div>
<div class="t" style="left:461px;top:841px;width:81px;height:21px;line-height:21px;font-size:16px;font-weight:bold;color:#222;text-align:center">2.93 <span style="color:#ccc;font-weight:normal">%</span></div>
<div class="t" style="left:553px;top:841px;width:180px;height:21px;line-height:21px;font-size:16px;color:#000">物理与电子科学学院</div>
<div class="t" style="left:734px;top:841px;width:50px;height:21px;line-height:21px;font-size:16px;font-weight:bold;color:#222;text-align:center">8</div>
<div class="t" style="left:785px;top:841px;width:51px;height:21px;line-height:21px;font-size:16px;color:#999;text-align:center">292</div>
<div class="t" style="left:837px;top:841px;width:76px;height:21px;line-height:21px;font-size:16px;font-weight:bold;color:#222;text-align:center">2.74<span style="color:#ccc;font-weight:normal">%</span></div>
<div class="t" style="left:923px;top:841px;width:200px;height:21px;line-height:21px;font-size:16px;color:#000">物理学</div>
<div class="t" style="left:1124px;top:841px;width:49px;height:21px;line-height:21px;font-size:16px;font-weight:bold;color:#222;text-align:center">2</div>
<div class="t" style="left:1174px;top:841px;width:51px;height:21px;line-height:21px;font-size:16px;color:#999;text-align:center">54</div>
<div class="t" style="left:1226px;top:841px;width:75px;height:21px;line-height:21px;font-size:16px;font-weight:bold;color:#222;text-align:center">3.7<span style="color:#ccc;font-weight:normal">%</span></div>
<div style="left:101px;top:885px;width:1200px;height:2px;background:#e4e4fa"></div>
<div style="left:146px;top:864px;width:1px;height:21px;background:#e2e2ea"></div>
<div style="left:192px;top:864px;width:1px;height:21px;background:#e2e2ea"></div>
<div style="left:542px;top:864px;width:1px;height:21px;background:#e2e2ea"></div>
<div style="left:913px;top:864px;width:1px;height:21px;background:#e2e2ea"></div>
<div class="t" style="left:101px;top:865px;width:45px;height:21px;line-height:21px;font-size:12px;font-weight:bold;color:#8a22e6;text-align:center">2023届</div>
<div class="t" style="left:147px;top:865px;width:45px;height:21px;line-height:21px;font-size:12.5px;font-weight:bold;color:#8a22e6;text-align:center">生源</div>
<div class="t" style="left:193px;top:864px;width:155px;height:21px;line-height:21px;font-size:16px;font-weight:bold;color:#000;text-align:center">兰州大学</div>
<div class="t" style="left:349px;top:864px;width:51px;height:21px;line-height:21px;font-size:16px;font-weight:bold;color:#222;text-align:center">1215</div>
<div class="t" style="left:401px;top:864px;width:59px;height:21px;line-height:21px;font-size:16px;color:#999;text-align:center">4378</div>
<div class="t" style="left:461px;top:864px;width:81px;height:21px;line-height:21px;font-size:16px;font-weight:bold;color:#222;text-align:center">27.75 <span style="color:#ccc;font-weight:normal">%</span></div>
<div class="t" style="left:553px;top:864px;width:180px;height:21px;line-height:21px;font-size:16px;color:#000">物理科学与技术学院</div>
<div class="t" style="left:734px;top:864px;width:50px;height:21px;line-height:21px;font-size:16px;font-weight:bold;color:#222;text-align:center">97</div>
<div class="t" style="left:785px;top:864px;width:51px;height:21px;line-height:21px;font-size:16px;color:#999;text-align:center">271</div>
<div class="t" style="left:837px;top:864px;width:76px;height:21px;line-height:21px;font-size:16px;font-weight:bold;color:#222;text-align:center">35.79<span style="color:#ccc;font-weight:normal">%</span></div>
<div class="t" style="left:923px;top:864px;width:200px;height:21px;line-height:21px;font-size:16px;color:#000">物理学(金属材料物理学)</div>
<div class="t" style="left:1124px;top:864px;width:49px;height:21px;line-height:21px;font-size:16px;font-weight:bold;color:#222;text-align:center">4</div>
<div class="t" style="left:1174px;top:864px;width:51px;height:21px;line-height:21px;font-size:16px;color:#999;text-align:center">11</div>
<div class="t" style="left:1226px;top:864px;width:75px;height:21px;line-height:21px;font-size:16px;font-weight:bold;color:#222;text-align:center">36.36<span style="color:#ccc;font-weight:normal">%</span></div>
</body></html>
